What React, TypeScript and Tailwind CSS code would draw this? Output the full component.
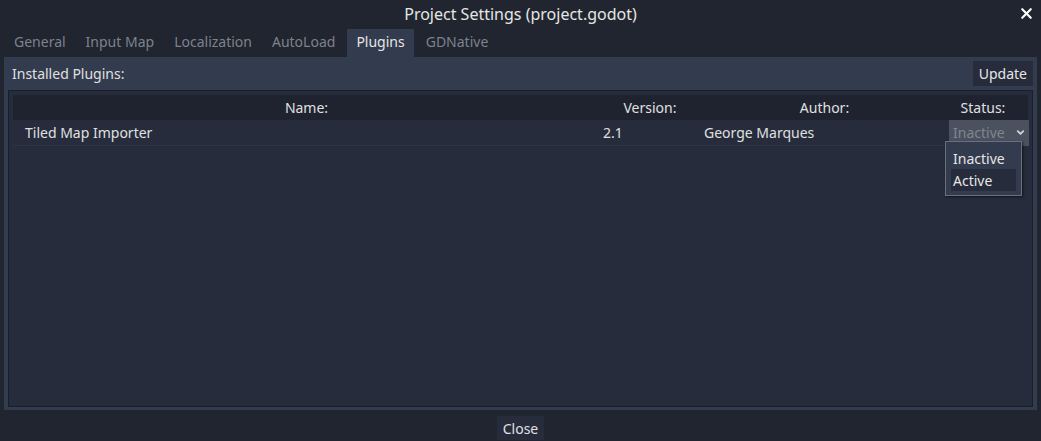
import { ChevronDown, X } from 'lucide-react';

const tabs = ['General', 'Input Map', 'Localization', 'AutoLoad', 'Plugins', 'GDNative'];

export default function App() {
  return (
    <div
      className="w-[1041px] h-[441px] bg-[#20252f] flex flex-col text-[14px] text-[#e0e0e0] overflow-hidden"
      style={{ fontFamily: '"Noto Sans", "Open Sans", sans-serif' }}
    >
      {/* title bar */}
      <div className="relative h-[29px] flex items-center justify-center pb-[2px]">
        <span className="text-[16px] text-[#e6e6e6]">Project Settings (project.godot)</span>
        <button className="absolute right-[6px] top-[5px] text-white">
          <X className="w-[17px] h-[17px]" strokeWidth={3} />
        </button>
      </div>

      {/* tabs */}
      <div className="flex h-[28px] px-[4px]">
        {tabs.map((t) => (
          <div
            key={t}
            className={
              t === 'Plugins'
                ? 'px-[9px] ml-[2px] flex items-center pb-[3px] bg-[#333b4f] text-[#e6e6e6] mr-[2px]'
                : 'px-[10px] flex items-center pb-[3px] text-[#7d828d]'
            }
          >
            {t}
          </div>
        ))}
      </div>

      {/* panel */}
      <div className="mx-[4px] h-[353px] bg-[#333b4f] px-[4px] pt-[4px] pb-[3px] flex flex-col">
        <div className="flex items-center justify-between h-[25px] pl-[4px]">
          <span>Installed Plugins:</span>
          <button className="h-[25px] px-[6px] bg-[#262c3b] text-[#e6e6e6]">Update</button>
        </div>

        <div className="relative mt-[4px] flex-1 border border-[#1a1e28] bg-[#262c3b] p-[4px]">
          <div className="grid grid-cols-[587px_100px_249px_80px] h-[25px] bg-[#1f2330] items-center">
            <div className="text-center">Name:</div>
            <div className="text-center">Version:</div>
            <div className="text-center">Author:</div>
            <div className="text-center pr-[12px]">Status:</div>
          </div>
          <div className="grid grid-cols-[587px_100px_249px_80px] h-[26px] items-center border-b border-[#2f3647]">
            <div className="pl-[12px] pb-[2px]">Tiled Map Importer</div>
            <div className="pl-[3px] pb-[2px]">2.1</div>
            <div className="pl-[4px] pb-[2px]">George Marques</div>
            <div className="h-[26px] bg-[#4b515e] flex items-center justify-between pl-[4px] pr-[3px] pb-[2px] text-[#80858f]">
              <span>Inactive</span>
              <ChevronDown className="w-[11px] h-[11px] text-[#d0d3d8]" strokeWidth={4} />
            </div>
          </div>

          {/* open dropdown */}
          <div className="absolute left-[936px] top-[50px] w-[77px] h-[55px] bg-[#333b4f] border border-[#6a707c] shadow-[1px_1px_2px_rgba(0,0,0,0.6)] px-[5px] pt-[5px] flex flex-col">
            <div className="h-[22px] flex items-center pl-[2px] text-[#e6e6e6]">Inactive</div>
            <div className="h-[22px] flex items-center pl-[2px] bg-[#262c3b] text-[#e6e6e6]">Active</div>
          </div>
        </div>
      </div>

      {/* footer */}
      <div className="flex justify-center pt-[6px]">
        <button className="h-[24px] px-[6px] bg-[#262c3b] text-[#e0e0e0]">Close</button>
      </div>
    </div>
  );
}
